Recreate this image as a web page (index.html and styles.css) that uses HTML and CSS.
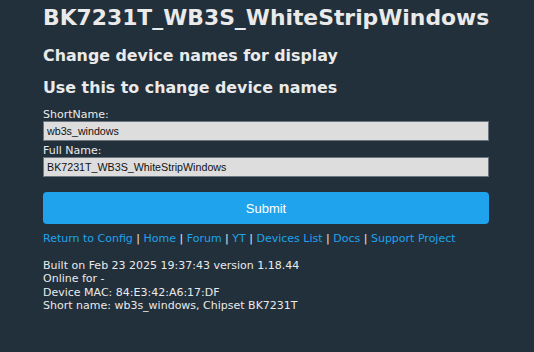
FILE: index.html
```html
<!DOCTYPE html>
<html lang="en">
<head>
    <meta charset="UTF-8">
    <meta name="viewport" content="width=device-width, initial-scale=1.0">
    <title>BK7231T_WB3S_WhiteStripWindows</title>
    <link rel="stylesheet" href="styles.css">
</head>
<body>
    <div class="main">
        <h1>BK7231T_WB3S_WhiteStripWindows</h1>
        <h3>Change device names for display</h3>
        <h3>Use this to change device names</h3>

        <form id="nameForm">
            <label for="shortName">ShortName:</label>
            <input type="text" id="shortName" name="shortName" value="wb3s_windows">
            <label for="name">Full Name:</label>
            <input type="text" id="name" name="name" value="BK7231T_WB3S_WhiteStripWindows">
            <button class="submit" type="button">Submit</button>
        </form>

        <div class="links">
            <a href="#">Return to Config</a> | <a href="#">Home</a> | <a href="#">Forum</a> | <a href="#">YT</a> | <a href="#">Devices List</a> | <a href="#">Docs</a> | <a href="#">Support Project</a>
        </div>

        <div class="info">
            Built on Feb 23 2025 19:37:43 version 1.18.44<br>
            Online for -<br>
            Device MAC: 84:E3:42:A6:17:DF<br>
            Short name: wb3s_windows, Chipset BK7231T
        </div>
    </div>
</body>
</html>
```

FILE: styles.css
```css
body {
    background-color: #22303c;
    margin: 0;
    font-family: "DejaVu Sans", Verdana, sans-serif;
    color: #eaeaea;
}

.main {
    width: 446px;
    margin-left: 43px;
}

h1 {
    font-size: 21.85px;
    margin: 0;
    padding-top: 6px;
    line-height: 24px;
    white-space: nowrap;
}

h3 {
    font-size: 15.85px;
    margin: 0;
    line-height: 20px;
}

h1 + h3 {
    margin-top: 16px;
}

h3 + h3 {
    margin-top: 12px;
}

form {
    margin-top: 11px;
}

label {
    display: block;
    font-size: 11px;
    line-height: 12px;
}

input {
    display: block;
    width: 100%;
    box-sizing: border-box;
    height: 20px;
    padding: 0 3px;
    margin-bottom: 4px;
    font-family: "Liberation Sans", Arial, sans-serif;
    font-size: 10.7px;
    color: #111;
    background-color: #dddddd;
    border: 1px solid #6b7680;
}

.submit {
    display: block;
    width: 100%;
    height: 32px;
    margin-top: 15px;
    background-color: #1fa3ec;
    color: #ffffff;
    border: none;
    border-radius: 4px;
    font-family: "Liberation Sans", Arial, sans-serif;
    font-size: 13px;
    cursor: pointer;
}

.links {
    margin-top: 8px;
    font-size: 11px;
    line-height: 14px;
    color: #eaeaea;
}

.links a {
    color: #1fa3ec;
    text-decoration: none;
}

.info {
    margin-top: 13px;
    font-size: 11px;
    line-height: 13.33px;
}
```
